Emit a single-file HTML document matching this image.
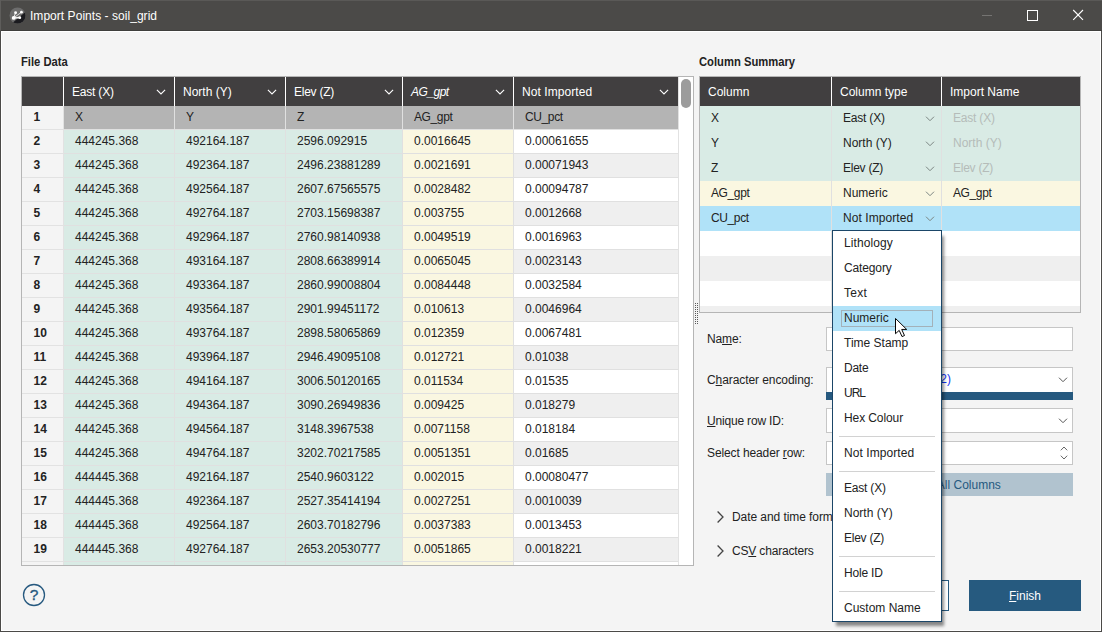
<!DOCTYPE html><html><head><meta charset="utf-8"><title>Import Points - soil_grid</title><style>
*{box-sizing:border-box;margin:0;padding:0}
html,body{width:1102px;height:632px;overflow:hidden;background:#f4f4f4}
body{font-family:"Liberation Sans",sans-serif;font-size:12px;color:#222;position:relative}
.abs{position:absolute}
#win{position:absolute;left:0;top:0;width:1102px;height:632px;background:#f4f4f4;overflow:hidden}
#title{position:absolute;left:0;top:0;width:1102px;height:31px;background:#4b4a48;border-top:1px solid #5a5957;border-bottom:1px solid #3f3e3c}
#title .t{position:absolute;left:30px;top:0;height:31px;line-height:31px;color:#fff;font-size:12px;white-space:nowrap;letter-spacing:.04px}
.wl{position:absolute;left:1px;top:31px;width:1100px;height:1px;background:#fff}
.wl2{position:absolute;left:1px;top:31px;width:1px;height:600px;background:#fff}
.bl{position:absolute;left:0;top:0;width:1px;height:632px;background:linear-gradient(#5e5d5b 0,#5e5d5b 30px,#4a4947 31px)}
.br{position:absolute;left:1101px;top:31px;width:1px;height:601px;background:#4b4a48}
.bb{position:absolute;left:0;top:631px;width:1102px;height:1px;background:#4b4a48}
.wl3{position:absolute;left:1100px;top:31px;width:1px;height:600px;background:#fff}
.wl4{position:absolute;left:1px;top:630px;width:1100px;height:1px;background:#fff}
.lbl{position:absolute;white-space:nowrap;font-size:12px;color:#222;line-height:14px}
.b{font-weight:bold;transform:scaleX(.936);transform-origin:0 0}
/* left table */
#lt{position:absolute;left:21px;top:76px;width:673px;height:490px;border:1px solid #b5b5b5;background:#fff;overflow:hidden}
#lt .hd{position:absolute;top:0;height:29px;background:#413f40;color:#fff;line-height:31px;white-space:nowrap}
#lt .hd span{position:absolute;left:8px;top:0}
#lt .c{position:absolute;height:24px;line-height:23px;white-space:nowrap;border-bottom:1px solid #e0e0e0;border-right:1px solid #e0e0e0;padding-left:11px}
#lt .rn{position:absolute;left:0;width:42px;height:24px;line-height:23px;font-weight:bold;padding-left:11.5px;background:#f4f4f4;border-bottom:1px solid #e2e2e2;border-right:1px solid #e2e2e2;color:#222}
/* right table */
#rt{position:absolute;left:699px;top:76px;width:382px;height:237px;border:1px solid #b5b5b5;background:#fff;overflow:hidden}
#rt .hd{position:absolute;top:0;height:29px;background:#413f40;color:#fff;line-height:30px;white-space:nowrap;padding-left:8px}
#rt .r{position:absolute;left:0;width:381px;height:25px}
#rt .r span{position:absolute;top:0;line-height:24px;white-space:nowrap}
#rt .r i.sep{position:absolute;top:0;width:1px;height:25px;background:#e0e0e0}
.sel{background:#b0e2f8}
.dis{color:#b5bcb9}
/* menu */
#menu{position:absolute;left:832px;top:230px;width:110px;height:392px;background:#fff;border:1px solid #1b4668;box-shadow:3px 5px 3px -1px rgba(0,0,0,.45)}
#menu .it{position:absolute;left:0;width:108px;height:25px;line-height:24px;padding-left:11px;white-space:nowrap}
#menu .sp{position:absolute;left:6px;width:96px;height:1px;background:#d2d2d2}
#menu .hl{background:#b0e2f8}
#menu .fr{position:absolute;left:8px;top:79px;width:92px;height:17px;border:1px solid #a3b1b9}
/* form */
.inp{position:absolute;left:826px;width:247px;background:#fff;border:1px solid #c6c6c6;overflow:hidden}
.btn{position:absolute;text-align:center;white-space:nowrap}
.g{background:#d9ebe5}.y{background:#faf7e1}.w{background:#fff}.a{background:#efefef}.h{background:#b4b4b4}
</style></head><body><div id="win">
<div id="title"><div class="t">Import Points - soil_grid</div><svg class="abs" style="left:8.6px;top:5.5px" width="17" height="17" viewBox="0 0 16 16"><defs><clipPath id="ic"><circle cx="8" cy="8" r="7.5"/></clipPath></defs><circle cx="8" cy="8" r="7.5" fill="#6d6d6d"/><path d="M16 4.3 L2 16 L16 16 Z" fill="#1b1b1f" clip-path="url(#ic)"/><g stroke="#fff" fill="#fff"><line x1="6.2" y1="5.4" x2="4.4" y2="10.3" stroke-width=".8"/><line x1="11.7" y1="4.9" x2="4.4" y2="10.3" stroke-width=".7"/><line x1="4.4" y1="10.3" x2="10.1" y2="10" stroke-width="1.3"/><circle cx="6.2" cy="5.4" r="1.35" stroke="none"/><circle cx="11.7" cy="4.9" r="1.3" stroke="none"/><circle cx="4.4" cy="10.3" r="1.8" stroke="none"/><circle cx="10.1" cy="10" r="1.4" stroke="none"/></g></svg><div class="abs" style="left:982px;top:14px;width:10px;height:1px;background:#757472"></div><svg class="abs" style="left:1026px;top:8px" width="13" height="13" viewBox="0 0 13 13"><rect x="1.5" y="1.5" width="10" height="10" fill="none" stroke="#fff" stroke-width="1"/></svg><svg class="abs" style="left:1072px;top:8px" width="12" height="12" viewBox="0 0 12 12"><path d="M1.2 1 L11 10.8 M11 1 L1.2 10.8" stroke="#fff" stroke-width="1.1" fill="none"/></svg></div>
<div class="wl"></div><div class="wl2"></div><div class="wl3"></div><div class="wl4"></div><div class="bl"></div><div class="br"></div><div class="bb"></div>
<div class="lbl b" style="left:21px;top:55px">File Data</div>
<div class="lbl b" style="left:699px;top:55px">Column Summary</div>
<div id="lt">
<div class="hd" style="left:0;width:41px"></div>
<div class="hd" style="left:42px;width:110px"><span style="letter-spacing:-0.2px">East (X)</span><svg class="abs" style="right:7.6px;top:11.5px" width="10" height="6" viewBox="0 0 10 6"><path d="M0.9 0.8 L5 4.9 L9.1 0.8" fill="none" stroke="#fff" stroke-width="1.1"/></svg></div>
<div class="hd" style="left:153px;width:110px"><span>North (Y)</span><svg class="abs" style="right:7.6px;top:11.5px" width="10" height="6" viewBox="0 0 10 6"><path d="M0.9 0.8 L5 4.9 L9.1 0.8" fill="none" stroke="#fff" stroke-width="1.1"/></svg></div>
<div class="hd" style="left:264px;width:116px"><span style="letter-spacing:-0.25px">Elev (Z)</span><svg class="abs" style="right:7.6px;top:11.5px" width="10" height="6" viewBox="0 0 10 6"><path d="M0.9 0.8 L5 4.9 L9.1 0.8" fill="none" stroke="#fff" stroke-width="1.1"/></svg></div>
<div class="hd" style="left:381px;width:110px"><span style="font-style:italic;letter-spacing:-.5px">AG_gpt</span><svg class="abs" style="right:7.6px;top:11.5px" width="10" height="6" viewBox="0 0 10 6"><path d="M0.9 0.8 L5 4.9 L9.1 0.8" fill="none" stroke="#fff" stroke-width="1.1"/></svg></div>
<div class="hd" style="left:492px;width:164px"><span style="letter-spacing:0.07px">Not Imported</span><svg class="abs" style="right:8.6px;top:11.5px" width="10" height="6" viewBox="0 0 10 6"><path d="M0.9 0.8 L5 4.9 L9.1 0.8" fill="none" stroke="#fff" stroke-width="1.1"/></svg></div>
<div class="rn" style="top:29px">1</div>
<div class="c h" style="left:42px;top:29px;width:111px">X</div>
<div class="c h" style="left:153px;top:29px;width:111px">Y</div>
<div class="c h" style="left:264px;top:29px;width:117px">Z</div>
<div class="c h" style="left:381px;top:29px;width:111px"><span style="letter-spacing:-0.38px;">AG_gpt</span></div>
<div class="c h" style="left:492px;top:29px;width:165px"><span style="letter-spacing:-0.38px;">CU_pct</span></div>
<div class="rn" style="top:53px">2</div>
<div class="c g" style="left:42px;top:53px;width:111px">444245.368</div>
<div class="c g" style="left:153px;top:53px;width:111px">492164.187</div>
<div class="c g" style="left:264px;top:53px;width:117px">2596.092915</div>
<div class="c y" style="left:381px;top:53px;width:111px">0.0016645</div>
<div class="c w" style="left:492px;top:53px;width:165px">0.00061655</div>
<div class="rn" style="top:77px">3</div>
<div class="c g" style="left:42px;top:77px;width:111px">444245.368</div>
<div class="c g" style="left:153px;top:77px;width:111px">492364.187</div>
<div class="c g" style="left:264px;top:77px;width:117px">2496.23881289</div>
<div class="c y" style="left:381px;top:77px;width:111px">0.0021691</div>
<div class="c a" style="left:492px;top:77px;width:165px">0.00071943</div>
<div class="rn" style="top:101px">4</div>
<div class="c g" style="left:42px;top:101px;width:111px">444245.368</div>
<div class="c g" style="left:153px;top:101px;width:111px">492564.187</div>
<div class="c g" style="left:264px;top:101px;width:117px">2607.67565575</div>
<div class="c y" style="left:381px;top:101px;width:111px">0.0028482</div>
<div class="c w" style="left:492px;top:101px;width:165px">0.00094787</div>
<div class="rn" style="top:125px">5</div>
<div class="c g" style="left:42px;top:125px;width:111px">444245.368</div>
<div class="c g" style="left:153px;top:125px;width:111px">492764.187</div>
<div class="c g" style="left:264px;top:125px;width:117px">2703.15698387</div>
<div class="c y" style="left:381px;top:125px;width:111px">0.003755</div>
<div class="c a" style="left:492px;top:125px;width:165px">0.0012668</div>
<div class="rn" style="top:149px">6</div>
<div class="c g" style="left:42px;top:149px;width:111px">444245.368</div>
<div class="c g" style="left:153px;top:149px;width:111px">492964.187</div>
<div class="c g" style="left:264px;top:149px;width:117px">2760.98140938</div>
<div class="c y" style="left:381px;top:149px;width:111px">0.0049519</div>
<div class="c w" style="left:492px;top:149px;width:165px">0.0016963</div>
<div class="rn" style="top:173px">7</div>
<div class="c g" style="left:42px;top:173px;width:111px">444245.368</div>
<div class="c g" style="left:153px;top:173px;width:111px">493164.187</div>
<div class="c g" style="left:264px;top:173px;width:117px">2808.66389914</div>
<div class="c y" style="left:381px;top:173px;width:111px">0.0065045</div>
<div class="c a" style="left:492px;top:173px;width:165px">0.0023143</div>
<div class="rn" style="top:197px">8</div>
<div class="c g" style="left:42px;top:197px;width:111px">444245.368</div>
<div class="c g" style="left:153px;top:197px;width:111px">493364.187</div>
<div class="c g" style="left:264px;top:197px;width:117px">2860.99008804</div>
<div class="c y" style="left:381px;top:197px;width:111px">0.0084448</div>
<div class="c w" style="left:492px;top:197px;width:165px">0.0032584</div>
<div class="rn" style="top:221px">9</div>
<div class="c g" style="left:42px;top:221px;width:111px">444245.368</div>
<div class="c g" style="left:153px;top:221px;width:111px">493564.187</div>
<div class="c g" style="left:264px;top:221px;width:117px">2901.99451172</div>
<div class="c y" style="left:381px;top:221px;width:111px">0.010613</div>
<div class="c a" style="left:492px;top:221px;width:165px">0.0046964</div>
<div class="rn" style="top:245px">10</div>
<div class="c g" style="left:42px;top:245px;width:111px">444245.368</div>
<div class="c g" style="left:153px;top:245px;width:111px">493764.187</div>
<div class="c g" style="left:264px;top:245px;width:117px">2898.58065869</div>
<div class="c y" style="left:381px;top:245px;width:111px">0.012359</div>
<div class="c w" style="left:492px;top:245px;width:165px">0.0067481</div>
<div class="rn" style="top:269px">11</div>
<div class="c g" style="left:42px;top:269px;width:111px">444245.368</div>
<div class="c g" style="left:153px;top:269px;width:111px">493964.187</div>
<div class="c g" style="left:264px;top:269px;width:117px">2946.49095108</div>
<div class="c y" style="left:381px;top:269px;width:111px">0.012721</div>
<div class="c a" style="left:492px;top:269px;width:165px">0.01038</div>
<div class="rn" style="top:293px">12</div>
<div class="c g" style="left:42px;top:293px;width:111px">444245.368</div>
<div class="c g" style="left:153px;top:293px;width:111px">494164.187</div>
<div class="c g" style="left:264px;top:293px;width:117px">3006.50120165</div>
<div class="c y" style="left:381px;top:293px;width:111px">0.011534</div>
<div class="c w" style="left:492px;top:293px;width:165px">0.01535</div>
<div class="rn" style="top:317px">13</div>
<div class="c g" style="left:42px;top:317px;width:111px">444245.368</div>
<div class="c g" style="left:153px;top:317px;width:111px">494364.187</div>
<div class="c g" style="left:264px;top:317px;width:117px">3090.26949836</div>
<div class="c y" style="left:381px;top:317px;width:111px">0.009425</div>
<div class="c a" style="left:492px;top:317px;width:165px">0.018279</div>
<div class="rn" style="top:341px">14</div>
<div class="c g" style="left:42px;top:341px;width:111px">444245.368</div>
<div class="c g" style="left:153px;top:341px;width:111px">494564.187</div>
<div class="c g" style="left:264px;top:341px;width:117px">3148.3967538</div>
<div class="c y" style="left:381px;top:341px;width:111px">0.0071158</div>
<div class="c w" style="left:492px;top:341px;width:165px">0.018184</div>
<div class="rn" style="top:365px">15</div>
<div class="c g" style="left:42px;top:365px;width:111px">444245.368</div>
<div class="c g" style="left:153px;top:365px;width:111px">494764.187</div>
<div class="c g" style="left:264px;top:365px;width:117px">3202.70217585</div>
<div class="c y" style="left:381px;top:365px;width:111px">0.0051351</div>
<div class="c a" style="left:492px;top:365px;width:165px">0.01685</div>
<div class="rn" style="top:389px">16</div>
<div class="c g" style="left:42px;top:389px;width:111px">444445.368</div>
<div class="c g" style="left:153px;top:389px;width:111px">492164.187</div>
<div class="c g" style="left:264px;top:389px;width:117px">2540.9603122</div>
<div class="c y" style="left:381px;top:389px;width:111px">0.002015</div>
<div class="c w" style="left:492px;top:389px;width:165px">0.00080477</div>
<div class="rn" style="top:413px">17</div>
<div class="c g" style="left:42px;top:413px;width:111px">444445.368</div>
<div class="c g" style="left:153px;top:413px;width:111px">492364.187</div>
<div class="c g" style="left:264px;top:413px;width:117px">2527.35414194</div>
<div class="c y" style="left:381px;top:413px;width:111px">0.0027251</div>
<div class="c a" style="left:492px;top:413px;width:165px">0.0010039</div>
<div class="rn" style="top:437px">18</div>
<div class="c g" style="left:42px;top:437px;width:111px">444445.368</div>
<div class="c g" style="left:153px;top:437px;width:111px">492564.187</div>
<div class="c g" style="left:264px;top:437px;width:117px">2603.70182796</div>
<div class="c y" style="left:381px;top:437px;width:111px">0.0037383</div>
<div class="c w" style="left:492px;top:437px;width:165px">0.0013453</div>
<div class="rn" style="top:461px">19</div>
<div class="c g" style="left:42px;top:461px;width:111px">444445.368</div>
<div class="c g" style="left:153px;top:461px;width:111px">492764.187</div>
<div class="c g" style="left:264px;top:461px;width:117px">2653.20530777</div>
<div class="c y" style="left:381px;top:461px;width:111px">0.0051865</div>
<div class="c a" style="left:492px;top:461px;width:165px">0.0018221</div>
<div class="rn" style="top:485px"></div>
<div class="c g" style="left:42px;top:485px;width:111px"></div>
<div class="c g" style="left:153px;top:485px;width:111px"></div>
<div class="c g" style="left:264px;top:485px;width:117px"></div>
<div class="c y" style="left:381px;top:485px;width:111px"></div>
<div class="c w" style="left:492px;top:485px;width:165px"></div>
<div class="abs" style="left:656px;top:0;width:15px;height:487px;background:#fff;border-left:1px solid #e2e2e2"></div>
<div class="abs" style="left:659px;top:2px;width:10px;height:29px;border-radius:5px;background:#9c9c9c"></div>
</div>
<div id="rt">
<div class="hd" style="left:0px;width:131px">Column</div>
<div class="hd" style="left:132px;width:109px">Column type</div>
<div class="hd" style="left:242px;width:138px">Import Name</div>
<div class="r g" style="top:29px"><span style="left:11px">X</span><span style="left:143px"><span style="letter-spacing:-0.2px;">East (X)</span></span><span style="left:253px" class="dis"><span style="letter-spacing:-0.2px;">East (X)</span></span><i class="sep" style="left:131px"></i><i class="sep" style="left:241px"></i><svg class="abs" style="left:225px;top:10px" width="10" height="6" viewBox="0 0 10 6"><path d="M1 0.7 L5 4.7 L9 0.7" fill="none" stroke="#7b8582" stroke-width="1"/></svg></div>
<div class="r g" style="top:54px"><span style="left:11px">Y</span><span style="left:143px">North (Y)</span><span style="left:253px" class="dis">North (Y)</span><i class="sep" style="left:131px"></i><i class="sep" style="left:241px"></i><svg class="abs" style="left:225px;top:10px" width="10" height="6" viewBox="0 0 10 6"><path d="M1 0.7 L5 4.7 L9 0.7" fill="none" stroke="#7b8582" stroke-width="1"/></svg></div>
<div class="r g" style="top:79px"><span style="left:11px">Z</span><span style="left:143px"><span style="letter-spacing:-0.25px;">Elev (Z)</span></span><span style="left:253px" class="dis"><span style="letter-spacing:-0.25px;">Elev (Z)</span></span><i class="sep" style="left:131px"></i><i class="sep" style="left:241px"></i><svg class="abs" style="left:225px;top:10px" width="10" height="6" viewBox="0 0 10 6"><path d="M1 0.7 L5 4.7 L9 0.7" fill="none" stroke="#7b8582" stroke-width="1"/></svg></div>
<div class="r y" style="top:104px"><span style="left:11px"><span style="letter-spacing:-0.38px;">AG_gpt</span></span><span style="left:143px">Numeric</span><span style="left:253px" class=""><span style="letter-spacing:-0.38px;">AG_gpt</span></span><i class="sep" style="left:131px"></i><i class="sep" style="left:241px"></i><svg class="abs" style="left:225px;top:10px" width="10" height="6" viewBox="0 0 10 6"><path d="M1 0.7 L5 4.7 L9 0.7" fill="none" stroke="#7b8582" stroke-width="1"/></svg></div>
<div class="r sel" style="top:129px"><span style="left:11px"><span style="letter-spacing:-0.38px;">CU_pct</span></span><span style="left:143px"><span style="letter-spacing:0.07px;">Not Imported</span></span><span style="left:253px" class=""></span><i class="sep" style="left:131px"></i><i class="sep" style="left:241px"></i><svg class="abs" style="left:225px;top:10px" width="10" height="6" viewBox="0 0 10 6"><path d="M1 0.7 L5 4.7 L9 0.7" fill="none" stroke="#7b8582" stroke-width="1"/></svg></div>
<div class="r w" style="top:154px"><span style="left:11px"></span><span style="left:143px"></span><span style="left:253px" class=""></span><i class="sep" style="left:131px"></i><i class="sep" style="left:241px"></i></div>
<div class="r a" style="top:179px"><span style="left:11px"></span><span style="left:143px"></span><span style="left:253px" class=""></span><i class="sep" style="left:131px"></i><i class="sep" style="left:241px"></i></div>
<div class="r w" style="top:204px"><span style="left:11px"></span><span style="left:143px"></span><span style="left:253px" class=""></span><i class="sep" style="left:131px"></i><i class="sep" style="left:241px"></i></div>
<div class="r a" style="top:229px"><span style="left:11px"></span><span style="left:143px"></span><span style="left:253px" class=""></span><i class="sep" style="left:131px"></i><i class="sep" style="left:241px"></i></div>
</div>
<svg class="abs" style="left:695px;top:303px" width="4" height="22"><g fill="#5a5a5a"><rect x="0" y="0" width="1" height="1"/><rect x="2" y="0" width="1" height="1"/><rect x="0" y="2" width="1" height="1"/><rect x="2" y="2" width="1" height="1"/><rect x="0" y="4" width="1" height="1"/><rect x="2" y="4" width="1" height="1"/><rect x="0" y="6" width="1" height="1"/><rect x="2" y="6" width="1" height="1"/><rect x="0" y="8" width="1" height="1"/><rect x="2" y="8" width="1" height="1"/><rect x="0" y="10" width="1" height="1"/><rect x="2" y="10" width="1" height="1"/><rect x="0" y="12" width="1" height="1"/><rect x="2" y="12" width="1" height="1"/><rect x="0" y="14" width="1" height="1"/><rect x="2" y="14" width="1" height="1"/><rect x="0" y="16" width="1" height="1"/><rect x="2" y="16" width="1" height="1"/><rect x="0" y="18" width="1" height="1"/><rect x="2" y="18" width="1" height="1"/><rect x="0" y="20" width="1" height="1"/><rect x="2" y="20" width="1" height="1"/></g></svg>
<div class="lbl" style="left:707px;top:332px;letter-spacing:-.15px">Na<u>m</u>e:</div>
<div class="lbl" style="left:707px;top:373px;letter-spacing:-.08px">C<u>h</u>aracter encoding:</div>
<div class="lbl" style="left:707px;top:414px;letter-spacing:-.18px"><u>U</u>nique row ID:</div>
<div class="lbl" style="left:707px;top:446px;letter-spacing:-.11px">Select header <u>r</u>ow:</div>
<div class="inp" style="top:327px;height:24px"></div>
<div class="inp" style="top:367px;height:26px"><span class="abs" style="left:20px;width:104px;top:0;line-height:22px;color:#1433f0;white-space:nowrap;overflow:hidden;text-align:right;direction:rtl"><bdo dir="ltr">(Windows-1252)</bdo></span><svg class="abs" style="left:231px;top:9px" width="10" height="6" viewBox="0 0 10 6"><path d="M1 0.7 L5 4.7 L9 0.7" fill="none" stroke="#555" stroke-width="1"/></svg></div>
<div class="abs" style="left:826px;top:392px;width:247px;height:8px;background:#26597f"></div>
<div class="inp" style="top:408px;height:25px"><svg class="abs" style="left:231px;top:9px" width="10" height="6" viewBox="0 0 10 6"><path d="M1 0.7 L5 4.7 L9 0.7" fill="none" stroke="#555" stroke-width="1"/></svg></div>
<div class="inp" style="top:441px;height:24px"><span class="abs" style="left:8px;top:0;line-height:22px">1</span><svg class="abs" style="left:233px;top:4px" width="8" height="5" viewBox="0 0 8 5"><path d="M0.8 4.3 L4 1 L7.2 4.3" fill="none" stroke="#666"/></svg><svg class="abs" style="left:233px;top:13px" width="8" height="5" viewBox="0 0 8 5"><path d="M0.8 0.7 L4 4 L7.2 0.7" fill="none" stroke="#666"/></svg></div>
<div class="btn" style="left:826px;top:473px;width:247px;height:23px;line-height:25px;padding-left:2px;background:#b1c3cf;color:#26597f">Import All Columns</div>
<svg class="abs" style="left:717px;top:511px" width="7" height="12" viewBox="0 0 7 12"><path d="M0.6 0.5 L6 6 L0.6 11.5" fill="none" stroke="#444" stroke-width="1.3"/></svg>
<svg class="abs" style="left:717px;top:545px" width="7" height="12" viewBox="0 0 7 12"><path d="M0.6 0.5 L6 6 L0.6 11.5" fill="none" stroke="#444" stroke-width="1.3"/></svg>
<div class="lbl" style="left:732px;top:510px;letter-spacing:-.07px">Date and time formats</div>
<div class="lbl" style="left:732px;top:544px;letter-spacing:-.17px">CS<u>V</u> characters</div>
<div class="btn" style="left:837px;top:580px;width:112px;height:31px;line-height:29px;background:#fff;border:1px solid #26597f;color:#26597f"><u>C</u>ancel</div>
<div class="btn" style="left:969px;top:580px;width:112px;height:31px;line-height:33px;background:#265a7f;color:#fff"><u>F</u>inish</div>
<svg class="abs" style="left:22px;top:583px" width="24" height="24" viewBox="0 0 24 24"><circle cx="12" cy="12" r="10.5" fill="none" stroke="#26597f" stroke-width="1.3"/><text x="12" y="17.4" text-anchor="middle" font-family="Liberation Sans, sans-serif" font-size="15.5" fill="#26597f" stroke="#26597f" stroke-width=".35">?</text></svg>
<div id="menu">
<div class="it" style="top:0px"><span style="letter-spacing:0.1px;">Lithology</span></div>
<div class="it" style="top:25px"><span style="letter-spacing:-0.13px;">Category</span></div>
<div class="it" style="top:50px"><span style="letter-spacing:0.25px;">Text</span></div>
<div class="it hl" style="top:75px">Numeric</div>
<div class="it" style="top:100px">Time Stamp</div>
<div class="it" style="top:125px"><span style="letter-spacing:-0.26px;">Date</span></div>
<div class="it" style="top:150px"><span style="letter-spacing:-1.0px;">URL</span></div>
<div class="it" style="top:175px"><span style="letter-spacing:-0.1px;">Hex Colour</span></div>
<div class="sp" style="top:205px"></div>
<div class="it" style="top:210px"><span style="letter-spacing:0.07px;">Not Imported</span></div>
<div class="sp" style="top:240px"></div>
<div class="it" style="top:245px"><span style="letter-spacing:-0.2px;">East (X)</span></div>
<div class="it" style="top:270px">North (Y)</div>
<div class="it" style="top:295px"><span style="letter-spacing:-0.25px;">Elev (Z)</span></div>
<div class="sp" style="top:325px"></div>
<div class="it" style="top:330px"><span style="letter-spacing:-0.2px;">Hole ID</span></div>
<div class="sp" style="top:360px"></div>
<div class="it" style="top:365px">Custom Name</div>
<div class="fr"></div>
</div>
<svg class="abs" style="left:895px;top:318px" width="13" height="20" viewBox="0 0 13 21" preserveAspectRatio="none"><path d="M0.5 0.5 L0.5 16.5 L4.2 13 L7 19.5 L9.5 18.4 L6.7 12 L11.7 12 Z" fill="#fff" stroke="#000" stroke-width="1" stroke-linejoin="miter"/></svg>
</div></body></html>
